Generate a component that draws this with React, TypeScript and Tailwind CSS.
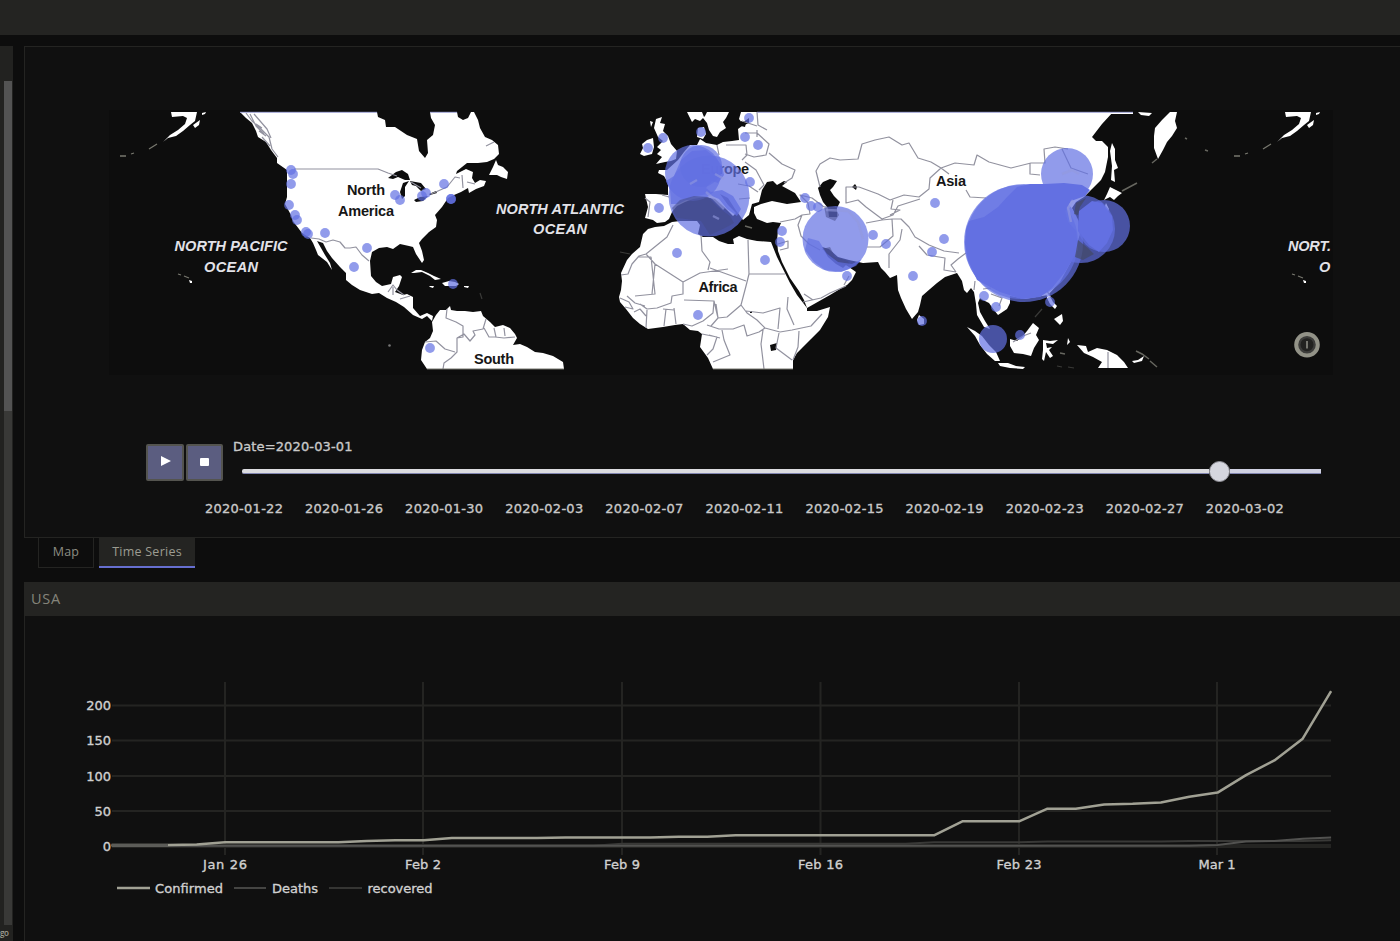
import React from "react";

const ORIGIN_X = 111.6;
const DAY = 28.36;
const ZERO_Y = 845.8;
const UNIT = 0.7;

const confirmed = [1, 1, 1, 2, 5, 5, 5, 5, 5, 7, 8, 8, 11, 11, 11, 11, 12, 12, 12, 12, 13, 13, 15, 15, 15, 15, 15, 15, 15, 15, 35, 35, 35, 53, 53, 59, 60, 62, 70, 76, 101, 122, 153, 221];
const deaths = [0, 0, 0, 0, 0, 0, 0, 0, 0, 0, 0, 0, 0, 0, 0, 0, 0, 0, 0, 0, 0, 0, 0, 0, 0, 0, 0, 0, 0, 0, 0, 0, 0, 0, 0, 0, 0, 0, 0, 1, 6, 7, 10, 12];
const recovered = [0, 0, 0, 0, 0, 0, 0, 0, 0, 0, 0, 0, 0, 0, 0, 0, 0, 0, 3, 3, 3, 3, 3, 3, 3, 3, 3, 3, 3, 5, 5, 5, 5, 6, 6, 6, 6, 6, 7, 7, 7, 7, 7, 8];

const toPoints = (values: number[]) =>
  values.map((v, i) => `${(ORIGIN_X + i * DAY).toFixed(1)},${(ZERO_Y - v * UNIT).toFixed(1)}`).join(" ");

const land = [
  // North and Central America
  "M240 112L246 118L252 123L256 131L258 137L266 142L271 150L277 158L277 163L287 170L287 177L287 197L285 204L291 215L293 221L302 233L310 238L313 243L316 250L318 255L327 262L332 270L330 263L325 255L321 248L317 241L323 243L327 251L332 258L340 267L346 273L346 280L352 285L360 290L372 294L379 293L387 298L396 302L404 307L413 315L422 319L427 316L432 321L433 316L427 313L420 316L413 308L413 297L407 294L403 295L395 292L399 286L402 277L400 275L393 277L391 284L382 286L376 282L371 276L370 261L372 252L379 248L387 247L393 249L400 244L409 246L413 247L416 254L422 263L424 260L422 251L419 243L422 239L429 232L436 227L437 220L435 215L442 207L448 198L454 195L461 192L468 188L469 193L476 189L484 186L486 181L480 180L475 183L472 178L473 172L466 169L456 174L457 171L467 163L478 163L487 162L494 159L499 154L498 145L492 140L485 137L480 128L478 120L474 112L471 112L468 118L463 120L458 117L457 112L430 112L431 118L435 125L433 135L427 140L428 153L425 158L419 151L417 139L407 135L395 127L386 127L385 120L378 117L377 112Z",
  "M496 160L493 167L489 175L497 175L501 177L507 179L508 172L503 167L498 165Z",
  "M411 273L416 270L421 270L428 273L434 276L441 279L435 280L430 276L422 272L414 273Z",
  "M442 283L449 281L455 282L459 284L456 286L445 286ZM429 286L434 286L433 288L430 287ZM464 286L469 286L468 288L464 287Z",
  // South America
  "M432 322L436 315L440 310L446 310L450 306L451 310L457 311L465 311L473 312L481 311L483 316L490 322L495 327L503 325L510 328L515 334L517 338L513 345L520 344L527 347L535 352L543 353L553 356L563 362L564 369L427 369L421 360L422 350L425 342L430 338L433 331Z",
  // Britain and Ireland
  "M656 119L662 117L660 123L665 124L663 131L668 136L671 144L677 151L676 159L671 161L665 162L656 164L662 157L657 154L661 150L657 147L663 141L658 137L654 128ZM650 121L653 122L651 127Z",
  "M647 140L653 138L654 147L652 154L644 156L640 154L643 148L642 144Z",
  // Scandinavia
  "M687 112L702 112L704 117L700 121L695 119L692 122ZM707 112L729 112L726 118L723 122L726 128L720 132L717 137L713 136L709 130L707 123L703 118L705 116ZM698 128L704 127L706 134L703 139L697 137Z",
  // Eurasia
  "M645 194L656 194L668 195L668 183L664 176L658 173L659 170L667 170L678 160L684 152L690 145L697 145L700 139L706 143L717 145L723 142L732 141L739 140L738 129L742 126L749 123L749 118L742 123L739 119L741 112L1113 112L1102 124L1092 137L1096 141L1102 141L1108 147L1108 157L1105 172L1101 180L1092 189L1084 197L1076 202L1072 208L1078 220L1080 234L1072 260L1060 282L1048 295L1025 299L1010 296L1010 303L1007 309L998 315L994 310L989 303L983 300L980 298L978 303L980 312L985 321L990 329L984 327L977 315L976 304L974 292L971 288L967 293L964 290L962 281L957 273L951 275L945 277L937 283L930 289L922 296L920 305L918 312L912 319L906 309L901 298L898 290L897 275L890 278L885 272L881 268L878 262L863 263L849 260L838 257L829 249L822 247L828 257L836 264L843 268L846 265L856 272L852 280L847 285L840 289L830 295L807 308L804 300L799 291L790 278L782 262L778 251L777 241L778 230L781 223L773 222L767 223L757 219L754 213L754 207L761 204L772 201L787 204L801 202L795 193L782 186L787 182L784 181L777 185L773 181L767 182L762 190L759 202L752 204L749 215L743 220L735 209L728 198L720 194L728 205L736 213L733 216L725 208L715 199L705 197L693 199L685 202L677 206L672 212L669 219L665 222L657 223L653 220L645 218L648 207Z",
  "M1110 112L1133 112L1133 114L1110 114ZM1138 112L1152 113L1149 116L1141 115Z",
  // Africa
  "M655 227L664 226L672 222L680 221L697 221L700 225L698 234L703 237L713 237L719 241L728 244L734 244L733 239L739 236L747 239L757 241L771 242L777 257L784 271L790 283L797 295L807 308L807 311L817 311L830 307L828 317L820 330L811 339L803 347L797 353L793 360L793 369L713 369L708 358L700 347L702 334L698 331L690 330L683 324L675 325L663 327L648 329L640 324L633 318L626 309L620 302L619 297L621 290L622 281L621 273L627 260L632 254L640 247L643 234L648 229Z",
  // Far East islands
  "M1170 112L1177 112L1175 121L1177 128L1172 136L1167 142L1163 150L1158 159L1154 148L1154 136L1155 128L1162 120Z",
  "M1112 143L1115 149L1115 160L1118 168L1114 170L1115 182L1111 180L1112 166L1110 151ZM1110 187L1116 190L1122 193L1118 196L1114 200L1110 197L1104 200L1107 194ZM1106 203L1109 209L1107 216L1101 221L1094 224L1101 216Z",
  "M919 315L924 319L924 324L919 325L917 320Z",
  "M967 327L975 331L982 336L989 345L996 352L1000 361L995 361L987 354L980 345L975 336ZM998 363L1008 363L1016 366L1025 367L1023 369L1010 368L1000 366ZM1010 339L1017 341L1022 337L1027 331L1033 323L1039 328L1036 335L1039 340L1034 348L1031 356L1023 354L1014 353L1010 346Z",
  "M1043 340L1050 341L1058 340L1053 344L1046 343L1047 348L1052 347L1049 350L1053 356L1050 358L1046 352L1044 361L1042 359L1043 350ZM1046 289L1050 288L1049 294L1053 302L1057 306L1055 309L1050 304L1047 298ZM1054 319L1062 314L1063 321L1060 325L1056 321Z",
  "M1077 345L1086 346L1088 352L1097 348L1107 350L1117 355L1124 362L1128 368L1098 368L1102 362L1093 357L1084 353ZM1132 361L1138 360L1144 356L1142 361L1134 363ZM1068 338L1070 342L1067 345Z",
];

const water = [
  "M388 178L392 175L396 172L402 170L408 174L410 180L405 180L398 177L393 179Z",
  "M403 183L409 181L405 187L405 196L402 199L400 192ZM410 181L421 183L426 189L421 191L416 186L412 185ZM414 200L420 197L428 196L423 201L416 202ZM429 194L436 191L437 193L430 195Z",
  "M818 188L823 182L830 179L837 181L833 187L830 190L834 196L840 202L837 208L837 217L829 217L828 208L823 202L820 195Z",
  "M770 345L777 343L776 350L771 351ZM750 311L752 311L752 313L750 313Z",
  "M852 187L855 184L857 187L856 190ZM741 121L746 123L745 127L741 126Z",
];

const borders = [
  "M294 169L378 169L388 173L397 176M411 182L421 188M431 194L438 191L447 187L455 177L460 178M311 238L319 239L326 242L333 240L340 242L345 248L350 248L356 247L362 255L369 261",
  "M246 113L252 121L261 129L269 137L272 149L278 157M254 114L267 129L271 138M250 114L256 126L264 134M256 124L262 128M259 131L266 136M262 137L270 146",
  "M462 175L463 188M467 182L475 184M486 146L494 142M388 292L393 285L397 290L404 295M400 299L410 296M393 287V295",
  "M447 309L446 318L456 322L463 326L463 337L457 338L457 352L451 358L444 363L443 369M425 342L436 341L445 349L455 352M457 338L464 334L470 341L475 335L473 331L483 329L486 319M484 328L489 337L496 337L494 328M495 337L504 338L515 337M504 328L505 336",
  "M673 225L667 237L646 254L639 256L632 264L628 274L621 275M646 254L655 264L683 282L700 273L728 269M638 257L651 257L655 294L635 296M655 264L652 294M701 235L702 251L710 262L708 270M748 240L749 274L785 274M749 274L746 286L741 305L727 317L718 318L716 304M710 268L746 281M683 282L683 294L672 296L671 303L657 308L647 309L640 304",
  "M684 300L714 301L713 313L703 321L692 326L683 324M674 308L676 324M666 309L664 326M647 310L646 328M627 296L635 303L645 306M707 325L719 329L733 329L744 325L747 336L759 332L765 328L780 332L792 330L811 326L822 314M746 311L763 313L780 308L778 329M788 297L787 309L794 325M763 330L761 344L764 369M779 333L776 348L792 360M799 331L798 347L793 360M722 330L724 340L730 355L713 362M709 335L720 338",
  "M620 298L629 302L633 309L625 307M634 312L640 309L646 316M663 309L674 310M714 301L718 318L711 326M741 305L747 313L757 320L765 328M702 334L717 337L713 349L707 355",
  "M648 217L650 202L645 198M662 195L669 197M726 145L746 145L747 155L742 160M745 133L757 133L769 144L766 155L754 157L745 154M769 153L782 164L795 170L792 178L784 183M757 112L758 125L767 130M745 162L756 170L764 185L759 190M742 121L757 126M738 184L749 186L758 192M739 199L750 198M717 145L719 155M757 130L757 137",
  "M780 222L795 219L802 215L810 214L808 203L800 195L812 198L824 207M802 215L798 225L801 236L809 244L820 250M778 244L788 241L788 248L780 250M803 302L821 298L830 293L846 286M804 294L813 300",
  "M849 276L844 285M820 187L816 171L820 164L830 158L840 160L858 159L862 144L875 140L889 137L902 145L909 143L918 158L931 162L941 168L955 163L974 165L977 155L989 162L1011 168L1031 163L1045 163L1044 149L1055 147L1068 149M941 168L930 178L929 189L919 197L904 195L890 200L878 194L859 187L846 187L846 203L858 200L866 207L882 219L893 215L898 206L920 199M941 168L949 174M966 190L970 197L986 198",
  "M866 223L882 220L892 219L901 219L909 227L915 237L929 245L944 251L959 253M892 219L893 236L880 247L867 247M902 229L900 240L889 254L889 268M919 246L927 255L945 258L944 270L956 272M956 272L951 265L958 259L966 253M974 290L975 281M983 289L991 288M991 294L1002 298L999 306M1030 163L1030 174L1040 175M893 200L891 209L900 210L890 215",
  "M1062 149L1071 168L1088 174M1108 352L1108 368M1013 342L1023 336L1031 333M1046 289L1051 298",
];

const smallDots: [number, number][] = [
  [291, 170], [293, 174], [291, 184], [289, 205], [295, 215], [297, 220], [306, 232], [308, 234], [325, 233], [367, 248], [354, 267],
  [395, 195], [400, 200], [422, 196], [426, 193], [444, 184], [451, 199], [451, 199], [453, 284], [430, 348],
  [648, 148], [663, 138], [701, 132], [749, 118], [745, 137], [758, 145], [659, 208], [677, 253], [765, 260], [698, 315], [750, 182],
  [805, 198], [811, 206], [818, 207], [782, 231], [780, 242], [847, 276], [873, 235], [886, 244], [913, 276], [935, 203], [944, 239],
  [932, 252], [922, 321], [984, 296], [996, 307], [1020, 335], [1050, 302],
];

const circles: [number, number, number][] = [
  [709, 196, 40.5], [693, 173, 28], [701, 166, 21],
  [835.5, 239, 33],
  [1067, 174, 26], [1081, 229, 34], [1104, 226, 26], [993, 339, 14],
  [1021, 242, 57], [1024, 243, 59],
];

function Alaska() {
  return (
    <g fill="#fff">
      <path d="M171 112L197 112L195 121L190 125L183 131L176 136L168 138L163 142L170 135L178 130L185 124L187 118L183 116L172 117Z" />
      <path d="M193 125L200 120L199 125L195 128ZM202 113L206 112L205 114L202 115Z" />
      <path d="M149 149L157 144M120 156L126 156M131 154L134 153M178 274L181 275M184 276L189 278" stroke="#77776e" strokeWidth="1.3" fill="none" />
      <path d="M189 280L192 281L192 283L190 283Z" />
    </g>
  );
}

function WorldMap() {
  const black = "fill-[#161616] font-bold [font-family:'Liberation_Sans',Arial,sans-serif]";
  const ocean = "fill-[#e2e2e8] font-bold italic [font-family:'Liberation_Sans',Arial,sans-serif]";
  return (
    <svg className="block h-[265px] w-[1224px] bg-[#0d0d0d]" viewBox="109 110 1224 265" fontSize="14.5">
      <g fill="#fff">{land.map((d) => <path key={d} d={d} />)}</g>
      <Alaska />
      <g transform="translate(1114 0)"><Alaska /></g>
      <path d={water.join("")} fill="#0d0d0d" />
      <path d={borders.join("")} fill="none" stroke="#92929f" strokeWidth="1.2" strokeLinejoin="round" />
      <path d="M240 112.3H377M430 112.3H457M757 112.3H1133" stroke="#9a9ed0" strokeWidth="1" />
      <path d="M427 369H564M713 369H793" stroke="#77776e" strokeWidth="1" />
      <path d="M1152 163L1157 159M1122 191L1137 183M1185 138L1187 139M1205 150L1208 151M1136 351L1142 354L1149 359M1150 361L1157 367M1060 353L1065 354M745 226L752 228" stroke="#66665f" strokeWidth="1.5" fill="none" />
      <path d="M480 293L482 299M1035 317L1042 309M620 252L630 254M1057 366L1062 367M1068 367L1074 368" stroke="#3a3a38" strokeWidth="1.2" fill="none" />
      <circle cx="389.500" cy="345.500" r="1.300" fill="#777" />
      <g textAnchor="middle">
        <text x="366" y="195" textLength="38" className={black}>North</text>
        <text x="366" y="216" textLength="56" className={black}>America</text>
        <text x="494" y="364" textLength="40" className={black}>South</text>
        <text x="718" y="292" textLength="39" className={black}>Africa</text>
        <text x="951" y="186" textLength="30" className={black}>Asia</text>
        <text x="725" y="174" textLength="48" className={black}>Europe</text>
      </g>
      <g fill="#6370e2">
        {circles.map(([x, y, r]) => <circle key={`${x}-${y}`} cx={x} cy={y} r={r} fillOpacity="0.7" />)}
        <path d="M666 181L674 176L681 160L692 151L706 150L716 158L722 166L724 175L718 183L712 181L706 188L711 192L722 190L733 196L741 209L737 216L727 209L719 199L707 194L693 197L678 204L671 204L670 190Z" fillOpacity="0.75" />
        <path d="M966 229L969 221L984 217L998 207L1008 196L1017 187L1030 184L1045 184L1064 183L1082 185L1090 190L1085 196L1071 201L1065 211L1068 222L1076 231L1078 250L1065 272L1052 288L1040 297L1022 299L1000 292L977 280L968 260L965 244Z" />
        <path d="M1079 211L1092 201L1102 203L1112 216L1113 230L1107 243L1099 252L1089 245L1078 231Z" />
        <g fillOpacity="0.7">{smallDots.map(([x, y], i) => <circle key={i} cx={x} cy={y} r="4.9" />)}</g>
      </g>
      <path d="M672 208L680 200L694 196L708 197L718 207L730 216L734 223L725 228L710 235L701 221L686 219L677 218Z" fill="#434a86" fillOpacity="0.55" />
      <path d="M824 206L835 207L839 215L835 221L826 217ZM822 249L830 247L835 257L848 261L850 267L838 262Z" fill="#434a86" fillOpacity="0.5" />
      <path d="M808 238L819 241L827 254L838 262L852 264L862 259L856 266L841 272L825 270L814 262L805 250Z" fill="#6370e2" fillOpacity="0.65" />
      <path d="M706 192L714 199L724 209M713 216L719 219M715 174L724 179M690 184L697 180M826 210L848 211L858 222L863 239M1073 200L1068 208L1071 222M1062 174L1072 170L1079 174" fill="none" stroke="#9299dd" strokeOpacity="0.6" strokeWidth="2.500" />
      <path d="M1076 203L1086 198L1080 207L1078 215L1074 214ZM1078 240L1088 248L1094 254L1083 260L1075 257Z" fill="#42485f" fillOpacity="0.65" />
      <g textAnchor="middle">
        <text x="231" y="250.500" textLength="113" className={ocean}>NORTH PACIFIC</text>
        <text x="231" y="271.500" textLength="54" className={ocean}>OCEAN</text>
        <text x="560" y="213.500" textLength="128" className={ocean}>NORTH ATLANTIC</text>
        <text x="560" y="234" textLength="54" className={ocean}>OCEAN</text>
      </g>
      <text x="1288" y="250.500" textLength="43" className={ocean}>NORT.</text>
      <text x="1319" y="271.500" className={ocean}>O</text>
      <circle cx="1307" cy="344.700" r="10.800" fill="#3c3c3a" stroke="#929287" strokeWidth="4" />
      <circle cx="1307" cy="344.700" r="6.500" fill="#222220" />
      <path d="M1307 341V348.500" stroke="#777770" strokeWidth="2" />
    </svg>
  );
}

const sliderDates = ["2020-01-22", "2020-01-26", "2020-01-30", "2020-02-03", "2020-02-07", "2020-02-11", "2020-02-15", "2020-02-19", "2020-02-23", "2020-02-27", "2020-03-02"];

function DateSlider() {
  return (
    <div className="ml-[121px] mt-[63px] flex">
      <div className="mt-[6px] flex gap-[2px]">
        <button className="flex h-[37px] w-[38px] items-center justify-center rounded-[2px] border-2 border-[#54544f] bg-[#5b5d80]">
          <svg className="-mt-[3px] h-[12px] w-[11px]" viewBox="0 0 11 12"><path d="M1 1L11 6L1 11Z" fill="#fff" /></svg>
        </button>
        <button className="flex h-[37px] w-[37px] items-center justify-center rounded-[2px] border-2 border-[#54544f] bg-[#5b5d80]">
          <span className="-mt-[2px] h-[8px] w-[9px] rounded-[1px] bg-white" />
        </button>
      </div>
      <div className="ml-[1px] flex flex-col text-[#c9c9c9] [-webkit-text-stroke:0.35px_#c9c9c9] [font-family:'DejaVu_Sans',sans-serif]">
        <div className="ml-[9px] h-[17px] text-[13px] leading-[17px] tracking-[0.14px]">Date=2020-03-01</div>
        <div className="ml-[18px] mt-[5px] flex h-[22px] w-[1079px] items-center">
          <div className="h-[5px] w-[967px] rounded-l-[2px] border-b border-[#8185b0] bg-[#dcdce0]" />
          <div className="h-[21px] w-[21px] rounded-full border border-[#8f8f96] bg-[#d5d6de]" />
          <div className="h-[5px] flex-1 border-b border-[#8185b0] bg-[#d0d1e2]" />
        </div>
        <div className="-ml-[30px] mt-[18px] flex text-[13px] leading-[18px] tracking-[0.27px]">
          {sliderDates.map((d) => <span key={d} className="w-[100.1px] text-center">{d}</span>)}
        </div>
      </div>
    </div>
  );
}

function Chart() {
  const xTicks: [number, string, number][] = [[225, "Jan 26", 44], [423, "Feb 2", 36], [622, "Feb 9", 36], [820.5, "Feb 16", 45], [1019, "Feb 23", 45], [1217, "Mar 1", 37]];
  const yTicks: [number, number][] = [[200, 705.5], [150, 740.5], [100, 776], [50, 811], [0, 846]];
  return (
    <svg className="block h-[325px] w-[1375px]" viewBox="25 616 1375 325" fontSize="13">
      <g stroke="#242422" strokeWidth="2">
        {xTicks.map(([x]) => <path key={x} d={`M${x} 682V855`} />)}
        {yTicks.map(([v, y]) => <path key={v} d={`M112 ${y}H1331`} strokeWidth={v === 0 ? 4 : 2} />)}
      </g>
      <g fill="none" strokeLinejoin="round">
        <polyline points={toPoints(recovered)} stroke="#393937" strokeWidth="2" />
        <polyline points={toPoints(deaths)} stroke="#525250" strokeWidth="2" />
        <polyline points={toPoints(confirmed)} stroke="#a1a194" strokeWidth="2.5" />
        <path d="M112 845.200H168" stroke="#5c5c58" strokeWidth="2.500" />
      </g>
      <g className="fill-[#d0d0d0] stroke-[#d0d0d0] [stroke-width:0.35px] [font-family:'DejaVu_Sans',sans-serif]">
        {yTicks.map(([v, y]) => <text key={v} x="111" y={y + 4.5} textAnchor="end">{v}</text>)}
        {xTicks.map(([x, label, w]) => <text key={label} x={x} y="869" textAnchor="middle" textLength={w}>{label}</text>)}
        <text x="155" y="893" textLength="68">Confirmed</text>
        <text x="272" y="893" textLength="46">Deaths</text>
        <text x="367.500" y="893" textLength="65">recovered</text>
      </g>
      <path d="M117 888H150" stroke="#a1a194" strokeWidth="2.500" />
      <path d="M234 888H266" stroke="#454543" strokeWidth="2" />
      <path d="M329 888H362" stroke="#353533" strokeWidth="2" />
    </svg>
  );
}

export default function App() {
  return (
    <div className="flex h-[941px] w-[1400px] flex-col overflow-hidden bg-[#0d0d0d] [font-family:'Open_Sans',sans-serif]">
      <header className="h-[35px] shrink-0 bg-[#242422]" />
      <div className="flex pt-[11px]">
        <aside className="flex h-[895px] w-[13px] shrink-0 flex-col overflow-hidden bg-[#222220]">
          <div className="h-[35px] shrink-0" />
          <div className="ml-[4px] h-[844px] w-[8px] shrink-0 bg-[#393937]">
            <div className="h-[330px] bg-[#535353]" />
          </div>
          <span className="mt-[1px] text-[8px] font-semibold leading-[13px] tracking-[-0.5px] text-[#a0a094]">go</span>
        </aside>
        <main className="ml-[11px] w-[1376px]">
          <section className="flex h-[492px] flex-col border-y border-l border-[#242422] bg-[#101010] pt-[63px]">
            <div className="ml-[84px]"><WorldMap /></div>
            <DateSlider />
          </section>
          <nav className="ml-[14px] flex h-[44px] gap-[5px] text-[12.500px] text-[#8c8c82]">
            <div className="flex h-[30px] w-[56px] items-center justify-center border border-t-0 border-[#242422] tracking-[0.2px]">Map</div>
            <div className="flex h-[30px] w-[96px] items-center justify-center border-b-2 border-[#666fd0] bg-[#242422] tracking-[0.25px] text-[#9c9c91]">Time Series</div>
          </nav>
          <section className="bg-[#101010]">
            <div className="flex h-[34px] items-center bg-[#242422] pl-[7px] text-[14.500px] tracking-[0.7px] text-[#84847b]">USA</div>
            <div className="border-l border-[#242422]"><Chart /></div>
          </section>
        </main>
      </div>
    </div>
  );
}
